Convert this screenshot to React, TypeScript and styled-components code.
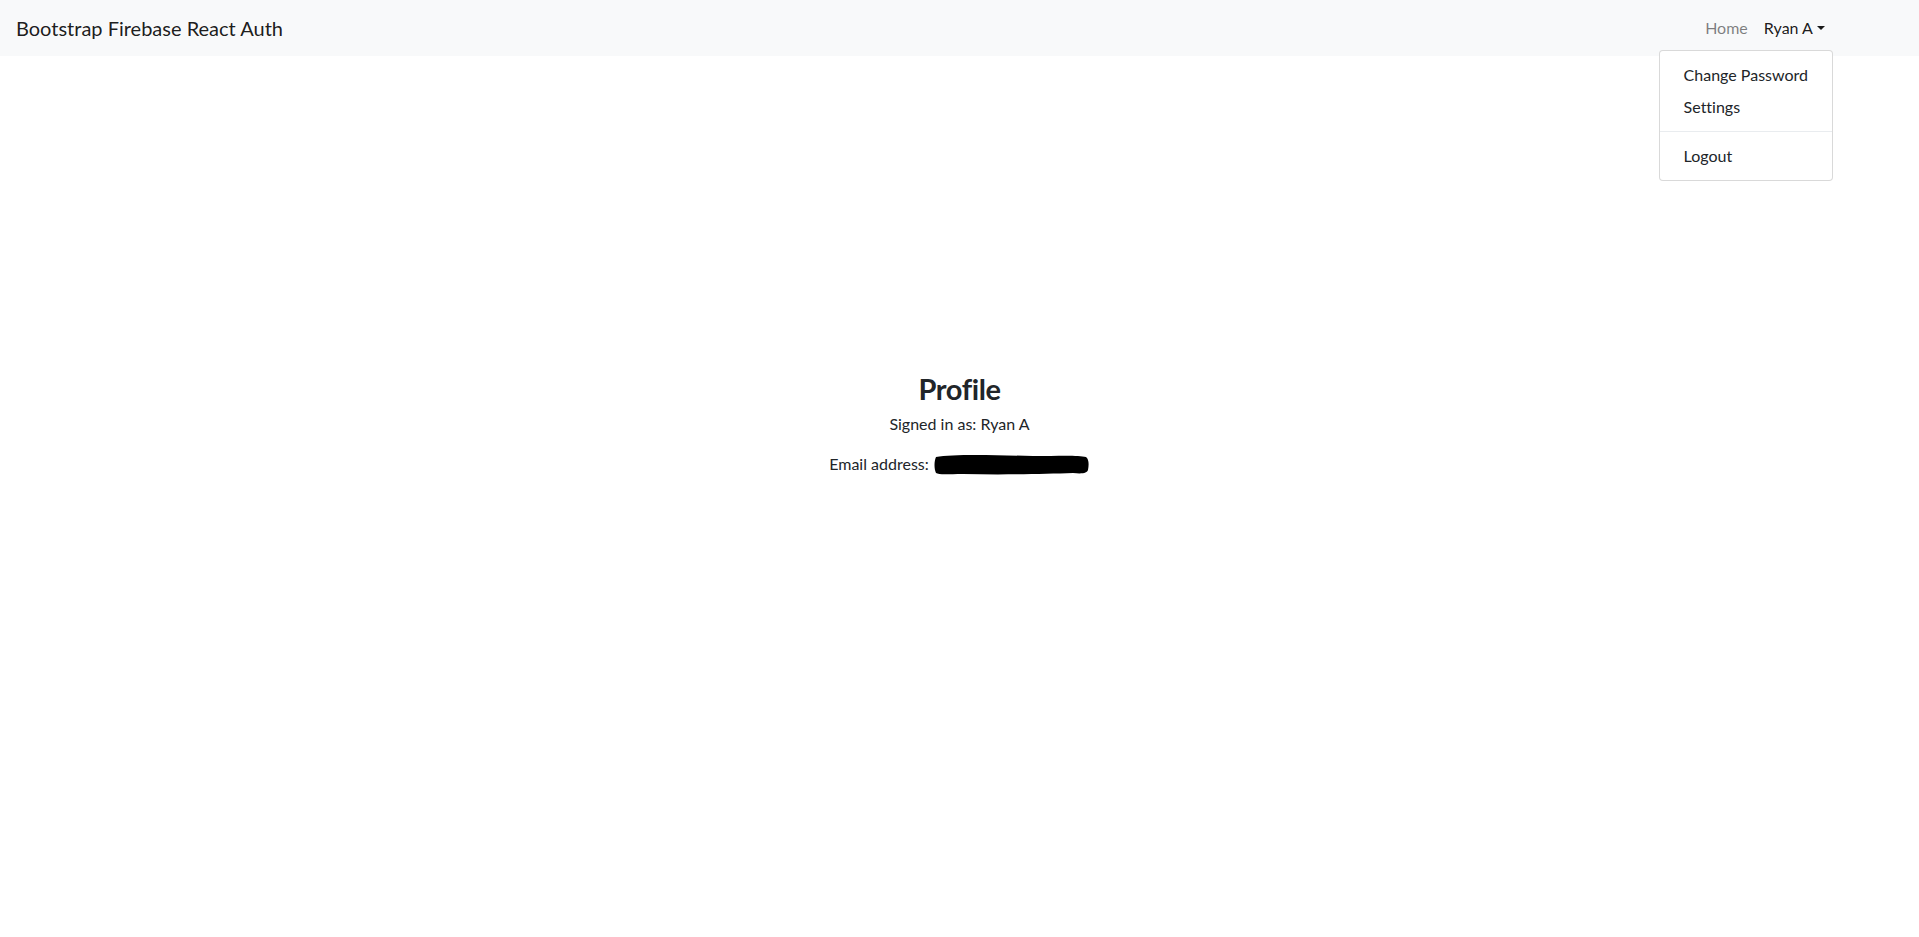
import { createGlobalStyle } from 'styled-components';
import styled from 'styled-components';

const GlobalStyle = createGlobalStyle`
  html, body {
    margin: 0;
    padding: 0;
    background: #fff;
  }
  body {
    font-family: Lato, "Noto Sans", "Liberation Sans", sans-serif;
    font-size: 16px;
    line-height: 1.5;
    color: #212529;
    font-variant-ligatures: none;
  }
  * {
    box-sizing: border-box;
  }
`;

const Navbar = styled.nav`
  display: flex;
  align-items: center;
  justify-content: space-between;
  height: 56px;
  padding: 8px 86px 8px 16px;
  background: #f8f9fa;
`;

const Brand = styled.a`
  font-size: 20px;
  line-height: 30px;
  padding: 5px 0;
  color: rgba(0, 0, 0, 0.9);
  text-decoration: none;
  cursor: pointer;
`;

const NavList = styled.ul`
  display: flex;
  align-items: center;
  list-style: none;
  margin: 0;
  padding: 0;
`;

const NavItem = styled.li`
  position: relative;
`;

const NavLink = styled.a<{ $active?: boolean }>`
  display: block;
  padding: 8px;
  line-height: 24px;
  color: ${(p) => (p.$active ? 'rgba(0, 0, 0, 0.9)' : 'rgba(0, 0, 0, 0.5)')};
  text-decoration: none;
  cursor: pointer;
`;

const Caret = styled.span`
  display: inline-block;
  margin-left: 0.255em;
  vertical-align: 0.255em;
  border-top: 0.3em solid;
  border-right: 0.3em solid transparent;
  border-left: 0.3em solid transparent;
  border-bottom: 0;
`;

const Menu = styled.div`
  position: absolute;
  top: calc(100% + 2px);
  right: 0;
  min-width: 160px;
  padding: 8px 0;
  background: #fff;
  border: 1px solid rgba(0, 0, 0, 0.15);
  border-radius: 4px;
  z-index: 10;
`;

const MenuItem = styled.a`
  display: block;
  padding: 4px 24px;
  line-height: 24px;
  color: #212529;
  white-space: nowrap;
  text-decoration: none;
  cursor: pointer;
`;

const Divider = styled.div`
  height: 0;
  margin: 8px 0;
  border-top: 1px solid #e9ecef;
`;

const Main = styled.main`
  display: flex;
  justify-content: center;
  padding-top: 314px;
`;

const Profile = styled.div`
  text-align: center;
`;

const Title = styled.h2`
  margin: 0 0 4px;
  font-size: 29px;
  font-weight: 700;
  line-height: 38px;
  letter-spacing: -0.4px;
`;

const Line = styled.p`
  display: flex;
  align-items: center;
  justify-content: center;
  gap: 4px;
  margin: 0 0 16px;
  line-height: 24px;
`;

const Redacted = () => (
  <svg width="157" height="23" viewBox="0 0 157 23" aria-hidden>
    <path
      d="M3 4 C20 1 60 2 100 3 C125 3 145 2 153 4 C156 6 156 12 155 17 C154 20 150 21 140 20 C110 21 70 22 30 21 C15 21 6 22 3 20 C1 16 1 8 3 4 Z"
      fill="#000"
    />
  </svg>
);

export default function App() {
  return (
    <>
      <GlobalStyle />
      <Navbar>
        <Brand>Bootstrap Firebase React Auth</Brand>
        <NavList>
          <NavItem>
            <NavLink>Home</NavLink>
          </NavItem>
          <NavItem>
            <NavLink $active>
              Ryan A<Caret />
            </NavLink>
            <Menu>
              <MenuItem>Change Password</MenuItem>
              <MenuItem>Settings</MenuItem>
              <Divider />
              <MenuItem>Logout</MenuItem>
            </Menu>
          </NavItem>
        </NavList>
      </Navbar>
      <Main>
        <Profile>
          <Title>Profile</Title>
          <Line>Signed in as: Ryan A</Line>
          <Line>
            Email address: <Redacted />
          </Line>
        </Profile>
      </Main>
    </>
  );
}
